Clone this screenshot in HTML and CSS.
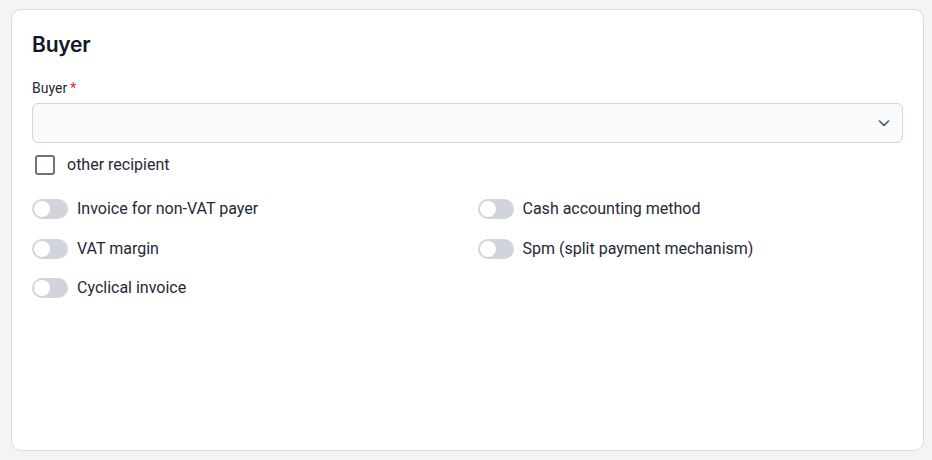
FILE: index.html
```html
<!DOCTYPE html>
<html lang="en">
<head>
    <meta charset="UTF-8">
    <meta name="viewport" content="width=device-width, initial-scale=1.0">
    <title>Buyer</title>
    <link rel="stylesheet" href="styles.css">
</head>
<body>
    <section class="card">
        <h2 class="card-title">Buyer</h2>

        <label class="field-label" for="buyer">Buyer<span class="required">*</span></label>
        <div class="select">
            <select id="buyer"></select>
            <svg class="select-arrow" width="16" height="16" viewBox="0 0 16 16" fill="none">
                <path d="M3.5 6l4.5 4.5 4.5-4.5" stroke="#4b5563" stroke-width="1.6" stroke-linecap="round" stroke-linejoin="round"/>
            </svg>
        </div>

        <label class="checkbox">
            <span class="box"></span>
            <span>other recipient</span>
        </label>

        <div class="switches">
            <label class="switch"><span class="track"></span>Invoice for non-VAT payer</label>
            <label class="switch"><span class="track"></span>Cash accounting method</label>
            <label class="switch"><span class="track"></span>VAT margin</label>
            <label class="switch"><span class="track"></span>Spm (split payment mechanism)</label>
            <label class="switch"><span class="track"></span>Cyclical invoice</label>
        </div>
    </section>
</body>
</html>
```

FILE: styles.css
```css
/* Base styles */
* {
    margin: 0;
    padding: 0;
    box-sizing: border-box;
    font-family: Roboto, 'Liberation Sans', sans-serif;
}

html, body {
    height: 100%;
}

body {
    background-color: #f3f4f6;
    padding: 9px 8px 9px 11px;
    color: #1f2937;
}

/* Card */
.card {
    height: 100%;
    background: #fff;
    border: 1px solid #d8dbe0;
    border-radius: 10px;
    padding: 21px 20px;
}

.card-title {
    font-family: Inter, 'Noto Sans', sans-serif;
    font-size: 21px;
    font-weight: 600;
    color: #111827;
    letter-spacing: -0.2px;
    line-height: 28px;
    margin-bottom: 21px;
}

/* Select field */
.field-label {
    display: block;
    font-size: 14px;
    line-height: 16px;
    color: #1f2937;
    margin-bottom: 7px;
}

.required {
    color: #e11d48;
    margin-left: 3px;
}

.select {
    position: relative;
    height: 40px;
}

.select select {
    width: 100%;
    height: 100%;
    appearance: none;
    background: #f9fafb;
    border: 1px solid #d1d5db;
    border-radius: 6px;
}

.select-arrow {
    position: absolute;
    right: 11px;
    top: 12px;
}

/* Checkbox */
.checkbox {
    display: flex;
    align-items: center;
    gap: 12px;
    margin: 12px 0 0 3px;
    font-size: 16px;
    line-height: 20px;
}

.box {
    width: 20px;
    height: 20px;
    border: 2px solid #6b7280;
    border-radius: 3px;
}

/* Toggles */
.switches {
    display: grid;
    grid-template-columns: 1fr 1fr;
    column-gap: 20px;
    row-gap: 19.5px;
    margin-top: 24px;
}

.switch {
    display: flex;
    align-items: center;
    gap: 9px;
    font-size: 16px;
    line-height: 20px;
}

.track {
    position: relative;
    width: 36px;
    height: 20px;
    border-radius: 10px;
    background: #d1d5db;
}

.track::after {
    content: '';
    position: absolute;
    left: 2px;
    top: 2px;
    width: 16px;
    height: 16px;
    border-radius: 50%;
    background: #fff;
}
```
